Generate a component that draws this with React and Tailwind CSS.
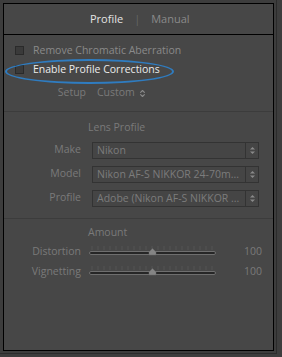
import { ChevronsUpDown } from "lucide-react";

const font = { fontFamily: '"Open Sans", "Noto Sans", sans-serif' };

function Stepper() {
  return (
    <svg width="7" height="9" viewBox="0 0 7 9" className="shrink-0">
      <path d="M1 3.5 L3.5 1 L6 3.5 Z" fill="#8a8a8a" />
      <path d="M1 5.5 L3.5 8 L6 5.5 Z" fill="#8a8a8a" />
    </svg>
  );
}

function SelectRow({ label, value }) {
  return (
    <div className="h-[24px] flex items-center">
      <div className="w-[77px] text-right text-[#7a7a7a]">{label}</div>
      <div className="ml-[11px] w-[167px] h-[17px] flex border border-[#333333] bg-[#454545]">
        <div className="flex-1 px-[4px] leading-[15px] text-[#7c7c7c] whitespace-nowrap overflow-hidden">
          {value}
        </div>
        <div className="w-[13px] border-l border-[#333333] flex items-center justify-center">
          <Stepper />
        </div>
      </div>
    </div>
  );
}

function Slider() {
  const ticks = [];
  for (let i = 0; i <= 20; i++) ticks.push(3 + i * 6);
  return (
    <svg width="128" height="14" viewBox="0 0 128 14">
      {ticks.map((x) => (
        <line key={x} x1={x} y1="2" x2={x} y2="6" stroke="#545454" strokeWidth="1" />
      ))}
      <rect x="0.5" y="7.5" width="126" height="3" rx="1.5" fill="#262626" stroke="#6e6e6e" />
      <path d="M60 11 L60 8 L63.5 4.5 L67 8 L67 11 Z" fill="#858585" stroke="#6a6a6a" strokeWidth="0.5" />
    </svg>
  );
}

function SliderRow({ label }) {
  return (
    <div className="h-[20px] flex items-center">
      <div className="w-[77px] text-right text-[#7a7a7a]">{label}</div>
      <div className="ml-[8px] mt-[-2px]">
        <Slider />
      </div>
      <div className="ml-auto mr-[11px] text-[#7a7a7a]">100</div>
    </div>
  );
}

export default function App() {
  return (
    <div className="w-[282px] h-[357px] bg-[#3d3d3d] text-[10.5px] relative" style={font}>
      <div className="w-[277px] h-[354px] border-r border-b border-[#2c2c2c] pt-[3px] pl-[3px]">
        <div className="w-[271px] h-[348px] border border-black bg-[#474747] flex flex-col">
          <div className="h-[31px] border-b border-black flex items-center pl-[86px] text-[11px]">
            <span className="text-[#e4e4e4]">Profile</span>
            <span className="mx-[11px] text-[#666666]">|</span>
            <span className="text-[#8a8a8a]">Manual</span>
          </div>

          <div className="mt-[6px] h-[19px] flex items-center pl-[11px]">
            <div className="w-[9px] h-[9px] border border-[#2a2a2a] bg-[#3a3a3a]" />
            <span className="ml-[9px] text-[#8a8a8a]">Remove Chromatic Aberration</span>
          </div>
          <div className="h-[19px] flex items-center pl-[11px]">
            <div className="w-[9px] h-[9px] border border-[#2a2a2a] bg-[#3a3a3a]" />
            <span className="ml-[9px] text-[#ececec]">Enable Profile Corrections</span>
          </div>

          <div className="mt-[5px] h-[18px] flex items-center">
            <div className="w-[82px] text-right text-[#7a7a7a]">Setup</div>
            <div className="ml-[11px] text-[#7a7a7a]">Custom</div>
            <ChevronsUpDown className="ml-[3px] w-[9px] h-[9px] text-[#8a8a8a]" strokeWidth={3} />
          </div>

          <div className="mt-[9px] h-px bg-[#3c3c3c]" />

          <div className="mt-[7px] h-[18px] flex items-center pl-[84px] text-[#7a7a7a]">Lens Profile</div>
          <div className="mt-[1px]">
            <SelectRow label="Make" value="Nikon" />
            <SelectRow label="Model" value="Nikon AF-S NIKKOR 24-70m..." />
            <SelectRow label="Profile" value="Adobe (Nikon AF-S NIKKOR ..." />
          </div>

          <div className="mt-[8px] h-px bg-[#3c3c3c]" />

          <div className="mt-[5px] h-[18px] flex items-center pl-[84px] text-[#7a7a7a]">Amount</div>
          <SliderRow label="Distortion" />
          <SliderRow label="Vignetting" />
        </div>
      </div>
      <div className="absolute left-[5px] top-[59px] w-[169px] h-[25px] rounded-[50%] border-2 border-[#2f7cc0]" />
    </div>
  );
}
